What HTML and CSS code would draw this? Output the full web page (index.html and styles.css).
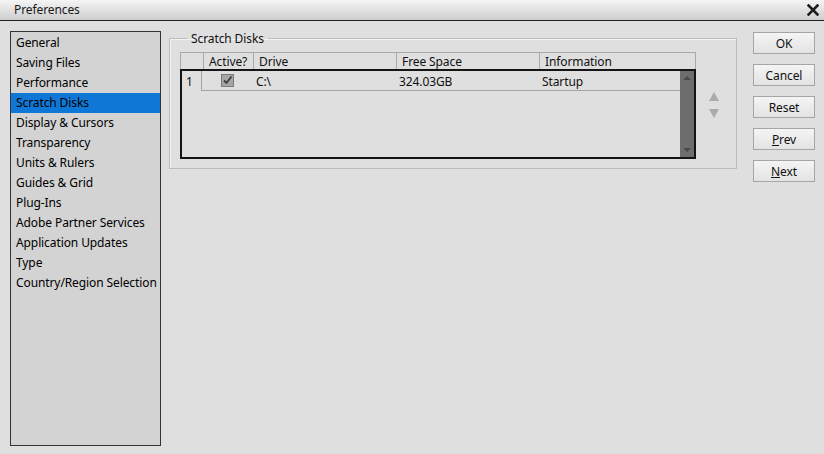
FILE: index.html
```html
<!DOCTYPE html>
<html lang="en">
<head>
    <meta charset="UTF-8">
    <title>Preferences</title>
    <link rel="stylesheet" href="styles.css">
</head>
<body>

    <!-- Title bar -->
    <div class="titlebar">
        <span class="title">Preferences</span>
        <svg class="close" width="12" height="12" viewBox="0 0 12 12">
            <path d="M1.5 1.5 L10.5 10.5 M10.5 1.5 L1.5 10.5" stroke="#1e1e1e" stroke-width="2.6" stroke-linecap="square"/>
        </svg>
    </div>

    <div class="main">
        <ul class="sidebar">
            <li>General</li>
            <li>Saving Files</li>
            <li>Performance</li>
            <li class="selected">Scratch Disks</li>
            <li>Display &amp; Cursors</li>
            <li>Transparency</li>
            <li>Units &amp; Rulers</li>
            <li>Guides &amp; Grid</li>
            <li>Plug-Ins</li>
            <li>Adobe Partner Services</li>
            <li>Application Updates</li>
            <li>Type</li>
            <li>Country/Region Selection</li>
        </ul>

        <fieldset class="group">
            <legend>Scratch Disks</legend>
            <div class="group-row">
                <div class="disk-table">
                    <div class="thead">
                        <div class="col c-num"></div>
                        <div class="col c-active">Active?</div>
                        <div class="col c-drive">Drive</div>
                        <div class="col c-free">Free Space</div>
                        <div class="col c-info">Information</div>
                    </div>
                    <div class="tbody">
                        <div class="rows">
                            <div class="row">
                                <div class="cell c-num">1</div>
                                <div class="cell c-active"><span class="check">
                                    <svg width="11" height="11" viewBox="0 0 11 11"><path d="M2 5.5 L4.5 8 L9.5 1.5" fill="none" stroke="#3d3d3d" stroke-width="1.8"/></svg>
                                </span></div>
                                <div class="cell c-drive">C:\</div>
                                <div class="cell c-free">324.03GB</div>
                                <div class="cell c-info">Startup</div>
                            </div>
                        </div>
                        <div class="scrollbar">
                            <span class="sb-up"></span>
                            <span class="sb-down"></span>
                        </div>
                    </div>
                </div>
                <div class="move">
                    <span class="arrow-up"></span>
                    <span class="arrow-down"></span>
                </div>
            </div>
        </fieldset>

        <div class="buttons">
            <button class="btn">OK</button>
            <button class="btn">Cancel</button>
            <button class="btn">Reset</button>
            <button class="btn"><u>P</u>rev</button>
            <button class="btn"><u>N</u>ext</button>
        </div>
    </div>

</body>
</html>
```

FILE: styles.css
```css
body {
    margin: 0;
    background-color: #dfdfdf;
    font-family: "Noto Sans", "DejaVu Sans", sans-serif;
    font-size: 12px;
    letter-spacing: -0.1px;
    color: #111;
    height: 454px;
    overflow: hidden;
}

/* Title bar */
.titlebar {
    height: 20px;
    display: flex;
    align-items: center;
    justify-content: space-between;
    padding: 0 5px 0 14px;
    background: linear-gradient(#f5f5f5, #cdcdcd);
    border-bottom: 1px solid #222;
}

.title {
    line-height: 20px;
    color: #1a1a1a;
}

.close {
    display: block;
}

.main {
    display: flex;
    align-items: flex-start;
    padding: 10px 0 0 10px;
}

/* Category list */
.sidebar {
    list-style: none;
    margin: 0;
    padding: 1px 0 0 0;
    width: 149px;
    height: 412px;
    border: 1px solid #333;
    background-color: #d3d3d3;
    color: #000;
}

.sidebar li {
    height: 20px;
    line-height: 20px;
    padding-left: 5px;
    white-space: nowrap;
}

.sidebar li.selected {
    background-color: #0f78d6;
}

/* Group box */
.group {
    margin: -1px 0 0 8px;
    padding: 5px 10px 0 10px;
    width: 546px;
    height: 132px;
    box-sizing: content-box;
    border: 1px solid #bcbcbc;
    box-shadow: inset 1px 1px 0 #f2f2f2;
}

.group legend {
    margin-left: 7px;
    padding: 0 4px;
    line-height: 17px;
}

.group-row {
    display: flex;
    align-items: flex-start;
}

.disk-table {
    width: 516px;
}

.thead {
    display: flex;
    height: 16px;
    border-top: 1px solid #a9a9a9;
    border-right: 1px solid #a9a9a9;
    border-left: 1px solid #a9a9a9;
}

.col {
    line-height: 17px;
    padding-left: 5px;
    border-left: 1px solid #a9a9a9;
    box-sizing: border-box;
}

.thead .c-num {
    border-left: none;
}

.c-num { width: 22px; }
.c-active { width: 50px; }
.c-drive { width: 143px; }
.c-free { width: 143px; }
.c-info { flex: 1; }

.tbody {
    display: flex;
    height: 86px;
    border: 2px solid #151515;
}

.rows {
    flex: 1;
}

.row {
    display: flex;
    height: 20px;
}

.cell {
    line-height: 22px;
    padding-left: 4px;
    box-sizing: border-box;
    border-bottom: 1px solid #a3a3a3;
}

.row .c-num {
    width: 20px;
    padding-left: 4px;
    border-bottom: none;
    border-right: 1px solid #a3a3a3;
}

.row .c-active {
    width: 50px;
    display: flex;
    justify-content: center;
    align-items: center;
    padding-left: 0;
}

.row .c-drive { width: 143px; }
.row .c-free { width: 143px; }

.check {
    width: 11px;
    height: 11px;
    border: 1px solid #7a7a7a;
    background-color: #a6a6a6;
    display: block;
}

.check svg {
    display: block;
}

.scrollbar {
    width: 14px;
    background-color: #6d6d6d;
    display: flex;
    flex-direction: column;
    justify-content: space-between;
    align-items: center;
    padding: 5px 0 5px 0;
    box-sizing: border-box;
}

.sb-up, .sb-down {
    width: 0;
    height: 0;
    border-left: 4px solid transparent;
    border-right: 4px solid transparent;
}

.sb-up { border-bottom: 4px solid #4a4a4a; }
.sb-down { border-top: 4px solid #4a4a4a; }

/* Move up / down arrows */
.move {
    display: flex;
    flex-direction: column;
    gap: 8px;
    margin: 40px 0 0 13px;
}

.arrow-up, .arrow-down {
    width: 0;
    height: 0;
    border-left: 5px solid transparent;
    border-right: 5px solid transparent;
}

.arrow-up { border-bottom: 9px solid #ababab; }
.arrow-down { border-top: 9px solid #ababab; }

/* Dialog buttons */
.buttons {
    display: flex;
    flex-direction: column;
    gap: 10px;
    margin: 1px 0 0 16px;
}

.btn {
    width: 62px;
    height: 22px;
    padding: 0;
    font-family: inherit;
    font-size: 12px;
    letter-spacing: inherit;
    color: #111;
    border: 1px solid #a6a6a6;
    border-radius: 0;
    background: linear-gradient(#f4f4f4, #e3e3e3);
}
```
